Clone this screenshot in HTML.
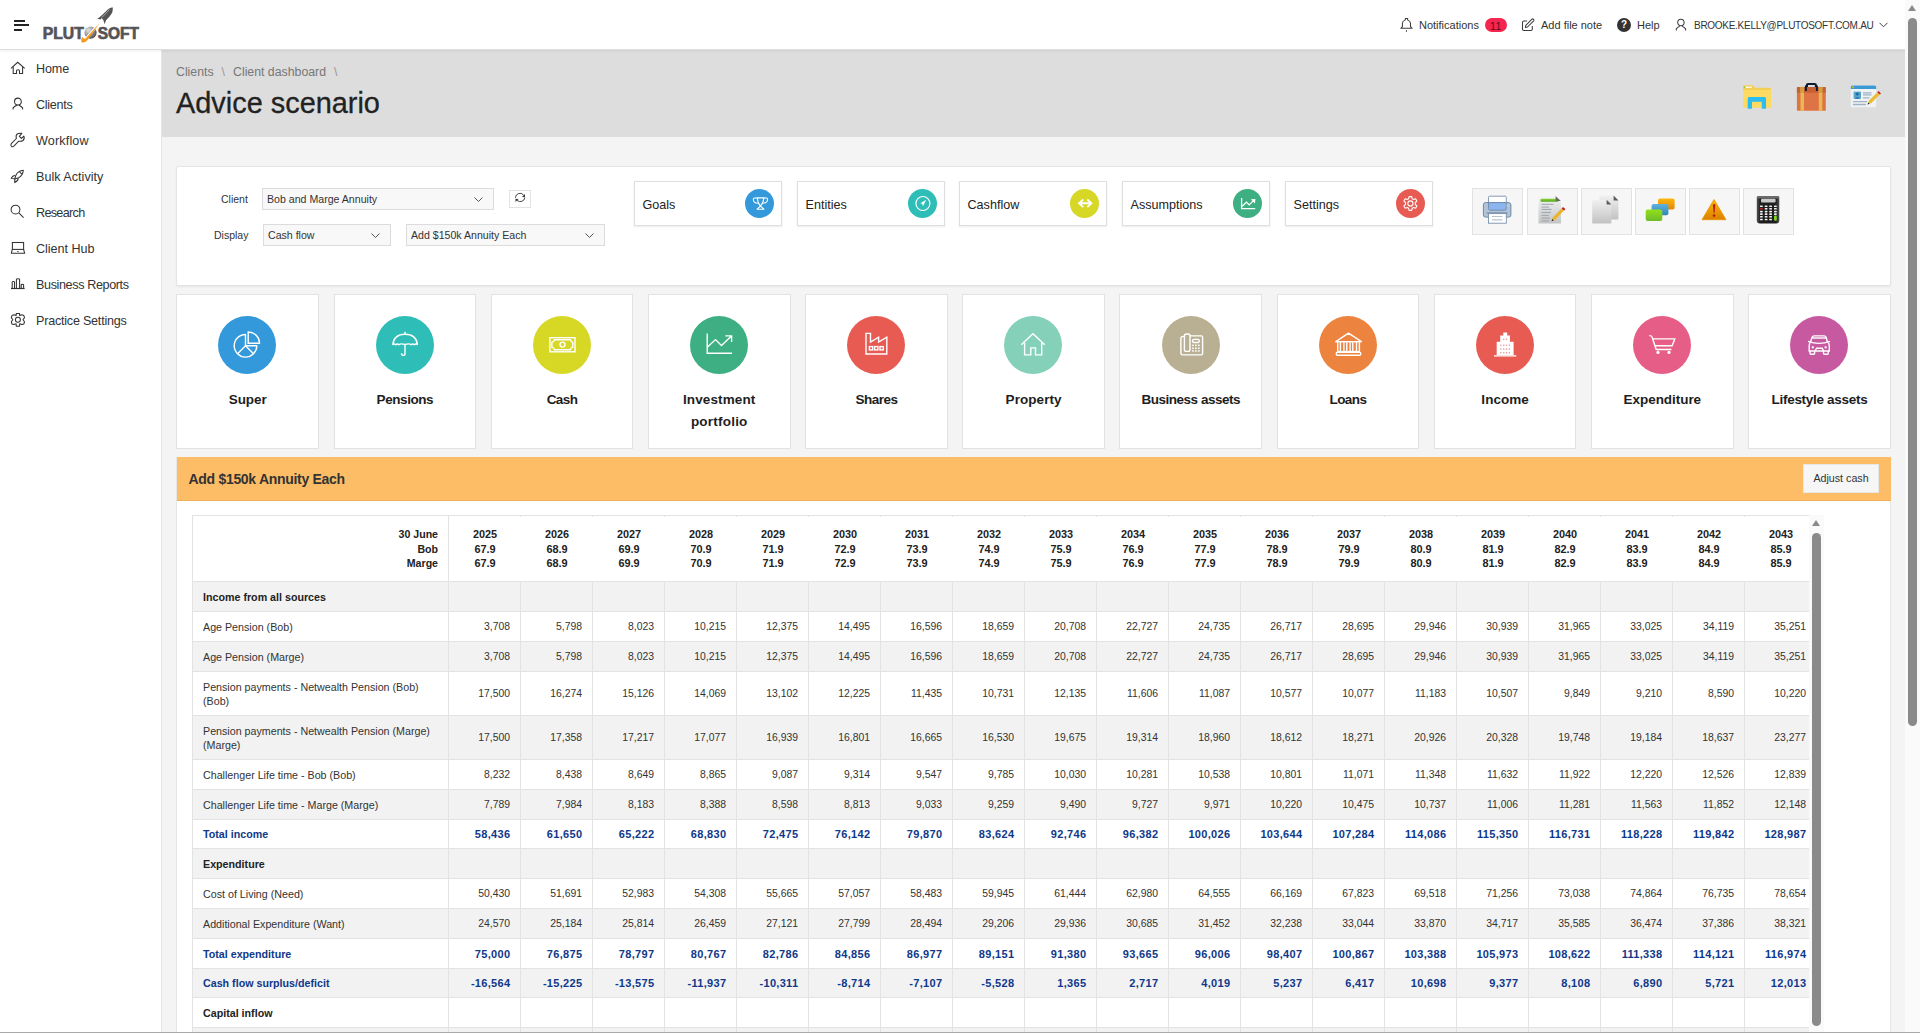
<!DOCTYPE html>
<html><head><meta charset="utf-8"><title>Advice scenario</title>
<style>
*{box-sizing:border-box}
html,body{margin:0;padding:0;overflow:hidden}
body{width:1920px;height:1033px;overflow:hidden;position:relative;background:#f4f4f4;font-family:"Liberation Sans",sans-serif;color:#333}
.abs{position:absolute}
#hdr{position:absolute;left:0;top:0;width:1905px;height:50px;background:#fff;z-index:5;border-bottom:1px solid #dedede;box-shadow:0 1px 3px rgba(0,0,0,.07)}
#side{position:absolute;left:0;top:49px;width:162px;height:984px;background:#fff;border-right:1px solid #e6e6e6;z-index:4}
.nav{position:absolute;left:0;height:20px;margin-top:0.7px;width:160px;font-size:12.6px;color:#333;line-height:20px}
.nav span{position:absolute;left:36px;top:0}
.nav svg{position:absolute;left:10px;top:3px}
#banner{position:absolute;left:162px;top:49px;width:1743px;height:88px;background:#dddddd}
#bc{position:absolute;left:176px;top:65px;font-size:12.3px;color:#777;white-space:nowrap}
#bc i{font-style:normal;margin:0 8px;color:#999}
#title{position:absolute;left:176px;top:85.5px;font-size:28.9px;color:#222;-webkit-text-stroke:0.3px #222;white-space:nowrap;line-height:34px}
#ctl{position:absolute;left:176px;top:166px;width:1715px;height:120px;background:#fff;border:1px solid #e4e4e4;border-radius:2px;box-shadow:0 1px 2px rgba(0,0,0,.06)}
.lbl{position:absolute;font-size:10.5px;color:#333;text-align:right;white-space:nowrap}
.sel{position:absolute;height:22px;background:#f8f8f8;border:1px solid #dcdcdc;font-size:10.6px;color:#333;line-height:20px;padding-left:4px;white-space:nowrap}
.sel svg{position:absolute;right:10px;top:8px}
.acard{position:absolute;top:181px;width:148px;height:45px;background:#fff;border:1px solid #dedede;box-shadow:0 1px 2px rgba(0,0,0,.08)}
.acl{position:absolute;left:7.5px;top:15.5px;font-size:12.6px;color:#222;white-space:nowrap}
.acirc{position:absolute;left:110px;top:7px;width:29px;height:29px;border-radius:50%}
.acirc svg{position:absolute;left:5.5px;top:5.5px}
.tb{position:absolute;top:188px;width:51px;height:47px;background:#f6f6f6;border:1px solid #e2e2e2}
.tb svg{position:absolute;left:9px;top:6px}
.tile{position:absolute;top:294.4px;width:142.6px;height:154.6px;background:#fff;border:1px solid #e2e2e2}
.circ{position:absolute;left:41.1px;top:20.3px;width:58px;height:58px;border-radius:50%}
.circ svg{position:absolute;left:14px;top:14px}
.tl{position:absolute;left:0;top:94px;width:140.6px;text-align:center;font-size:13.5px;font-weight:bold;color:#1e1e1e;line-height:22px;white-space:nowrap}
#obar{position:absolute;left:177px;top:457px;width:1714px;height:44px;background:#fdbd66;border-bottom:1px solid #efae58}
#obar .t{position:absolute;left:11.5px;top:13.5px;font-size:14px;letter-spacing:-0.3px;font-weight:bold;color:#333;white-space:nowrap}
#adj{position:absolute;left:1626px;top:7px;width:76px;height:29px;background:#f6f6f6;border:1px solid #e8e8e8;font-size:10.7px;color:#333;line-height:27px;text-align:center;white-space:nowrap}
#tcont{position:absolute;left:176px;top:457px;width:1715px;height:576px;background:#fff;border:1px solid #e6e6e6}
#tscroll{position:absolute;left:192px;top:515px;width:1617px;height:518px;overflow:hidden}
#tgrid{position:absolute;left:0;top:0;width:1624px;height:600px;border-left:1px solid #e3e3e3;border-top:1px solid #e3e3e3}
.hrow{position:absolute;left:0;width:1624px;background:#fff;border-bottom:1px solid #e3e3e3}
.hc0{position:absolute;left:0;top:11px;width:245px;text-align:right;font-size:10.6px;font-weight:bold;color:#222;line-height:14.5px}
.hc{position:absolute;top:11px;width:72px;text-align:center;font-size:10.9px;font-weight:bold;color:#222;line-height:14.5px}
.hrow:before{content:"";position:absolute;left:255px;top:0;bottom:0;border-left:1px solid #e3e3e3}
.row{position:absolute;left:0;width:1624px;background:#fff;border-bottom:1px solid #e3e3e3}
.row.g{background:#f2f2f2}
.c0{position:absolute;left:0;top:0;bottom:0;width:256px;border-right:1px solid #e3e3e3;padding-left:10px;font-size:10.7px;color:#333;display:flex;align-items:center;line-height:14px;white-space:nowrap}
.c{position:absolute;top:0;bottom:0;width:72px;border-right:1px solid #e3e3e3;text-align:right;padding-right:10px;font-size:10.4px;color:#333;display:flex;align-items:center;justify-content:flex-end}
.sec .c0{font-weight:bold;color:#222}
.tot .c0,.tot .c{font-weight:bold;color:#10388a}
.tot .c{font-size:11px;letter-spacing:0.3px;padding-right:9.7px}
#tsb{position:absolute;left:1809px;top:515px;width:15px;height:518px;background:#fafafa}
#tsb .th{position:absolute;left:3px;top:18px;width:9px;height:493px;border-radius:5px;background:#8a8a8a}
#psb{position:absolute;left:1905px;top:0;width:15px;height:1033px;background:#fafafa;z-index:6}
#psb .th{position:absolute;left:3px;top:18px;width:9px;height:708px;border-radius:5px;background:#8a8a8a}
.arr{position:absolute;left:3px;top:5px;width:0;height:0;border-left:4.5px solid transparent;border-right:4.5px solid transparent;border-bottom:6px solid #8a8a8a}
#bline{position:absolute;left:0;top:1031.6px;width:1920px;height:1.4px;background:#aaaaaa;z-index:7}
.hicon{position:absolute}
.htxt{position:absolute;top:18px;font-size:11px;color:#333;white-space:nowrap;line-height:14px}
</style></head>
<body>
<div id="hdr">
  <!-- hamburger -->
  <div class="abs" style="left:14px;top:20px;width:11px;height:1.6px;background:#222"></div>
  <div class="abs" style="left:14px;top:24.3px;width:15px;height:1.6px;background:#222"></div>
  <div class="abs" style="left:14px;top:29px;width:8px;height:1.6px;background:#222"></div>
  <!-- logo -->
  <svg class="abs" style="left:0;top:0" width="150" height="49" viewBox="0 0 150 49">
    <defs><radialGradient id="sph" cx="0.32" cy="0.3" r="0.75"><stop offset="0" stop-color="#e4e4e4"/><stop offset="0.55" stop-color="#9a9a9a"/><stop offset="1" stop-color="#4a4a4a"/></radialGradient></defs>
    <text x="42.8" y="38.6" font-family="Liberation Sans" font-weight="bold" font-size="16" fill="#545457" stroke="#545457" stroke-width="0.7" textLength="41" lengthAdjust="spacingAndGlyphs">PLUT</text>
    <text x="97.8" y="38.6" font-family="Liberation Sans" font-weight="bold" font-size="16" fill="#545457" stroke="#545457" stroke-width="0.7" textLength="41.2" lengthAdjust="spacingAndGlyphs">SOFT</text>
    <circle cx="90.5" cy="32.6" r="6.1" fill="url(#sph)"/>
    <path d="M85 39.5 L100 22.5" stroke="#fff" stroke-width="2.2"/>
    <path d="M81.4 42.3 Q80.3 39.5 82.3 36.8 Q83.3 39.3 85.6 38.6 L99.8 22.8 L87.6 40 Q84.8 43.3 81.4 42.3 Z" fill="#f39a1c"/>
    <path d="M112.6 7.2 Q113.8 11.5 109.6 16.4 L104.8 21.4 L100.2 16.8 L105.2 11.9 Q109.4 7.6 112.6 7.2 Z" fill="#545457"/>
    <path d="M102.2 15.6 L97.2 18.8 L101 19.6 Z M106.2 19 L104.8 24.2 L103.4 20.6 Z" fill="#545457"/>
    <path d="M101.8 17.6 L109.5 9.6" stroke="#fff" stroke-width="0.6" opacity="0.8"/>
  </svg>
  <!-- right header items -->
  <svg class="hicon" style="left:1396px;top:14px" width="20" height="20" viewBox="0 0 20 20"><path d="M6.4 12.6 V9.2 Q6.4 7.3 9.3 5.9 V4.4 H11.6 V5.9 Q14.5 7.3 14.5 9.2 V12.6 L16.1 14.3 H4.8 Z" stroke="#3d3d3d" stroke-width="1.05" fill="none" stroke-linejoin="round"/><path d="M10.45 16.3 V17.7" stroke="#3d3d3d" stroke-width="1.1"/></svg>
  <span class="htxt" style="left:1419px">Notifications</span>
  <div class="abs" style="left:1485px;top:18px;width:22px;height:14px;border-radius:7px;background:#f4254f;color:#5e0c1c;font-size:10.5px;line-height:17px;text-align:center;letter-spacing:0.5px">11</div>
  <svg class="hicon" style="left:1518px;top:14px" width="20" height="20" viewBox="0 0 20 20"><path d="M9.1 7 H5.8 Q4.5 7 4.5 8.3 V15.2 Q4.5 16.5 5.8 16.5 H13 Q14.3 16.5 14.3 15.2 V12" stroke="#3d3d3d" stroke-width="1.05" fill="none"/><path d="M7.4 13.4 L7.8 11.3 L14 5.1 Q14.8 4.5 15.6 5.3 Q16.3 6.1 15.7 6.8 L9.5 13 Z" stroke="#3d3d3d" stroke-width="1.05" fill="none" stroke-linejoin="round"/></svg>
  <span class="htxt" style="left:1541px">Add file note</span>
  <div class="abs" style="left:1617px;top:18px;width:14px;height:14px;border-radius:50%;background:#333;color:#fff;font-size:10px;font-weight:bold;line-height:14px;text-align:center">?</div>
  <span class="htxt" style="left:1637px">Help</span>
  <svg class="hicon" style="left:1672px;top:14px" width="20" height="20" viewBox="0 0 20 20"><ellipse cx="8.9" cy="8.5" rx="3.2" ry="3.3" stroke="#3d3d3d" stroke-width="1.05" fill="none"/><path d="M4.3 16.6 V14.9 Q5.5 13.3 7.8 12.1 M13.6 16.6 V14.9 Q12.4 13.3 10 12.1" stroke="#3d3d3d" stroke-width="1.05" fill="none"/></svg>
  <span class="htxt" style="left:1694px;font-size:10px;letter-spacing:-0.28px;top:18.5px">BROOKE.KELLY@PLUTOSOFT.COM.AU</span>
  <svg class="hicon" style="left:1879px;top:22px" width="9" height="6" viewBox="0 0 9 6"><path d="M0.5 0.8 L4.5 4.8 L8.5 0.8" stroke="#444" stroke-width="1" fill="none"/></svg>
</div>

<div id="side">
  <svg class="abs" style="left:6px;top:7px" width="30" height="24" viewBox="0 0 30 24"><path d="M5 12.4 L11.7 6.3 L18.7 12.4" stroke="#333" stroke-width="1.05" fill="none"/><path d="M7.2 10.6 V17.4 H10.5 V14.8 Q10.5 13.7 12 13.7 Q13.5 13.7 13.5 14.8 V17.4 H16.6 V10.6" stroke="#333" stroke-width="1.05" fill="none"/></svg>
  <div class="nav" style="top:9px"><span style="letter-spacing:-0.13px">Home</span></div>
  <svg class="abs" style="left:6px;top:43px" width="30" height="24" viewBox="0 0 30 24"><ellipse cx="11.9" cy="9.6" rx="3.4" ry="3.5" stroke="#333" stroke-width="1.05" fill="none"/><path d="M7.1 17.6 V15.9 Q8.3 14.3 10.8 13.2 M16.6 17.6 V15.9 Q15.4 14.3 13 13.2" stroke="#333" stroke-width="1.05" fill="none"/></svg>
  <div class="nav" style="top:45px"><span style="letter-spacing:-0.29px">Clients</span></div>
  <svg class="abs" style="left:6px;top:79px" width="30" height="24" viewBox="0 0 30 24"><path d="M5.3 15.6 L10.4 10.5 Q9.5 7.3 11.2 6 Q12.6 5 15.8 5.3 L13.3 8.4 L15.4 10.4 L17.8 8.1 Q19 10.6 17 12.5 Q15.3 13.7 12.7 13.2 L7.6 18.3 Q6.3 19.3 5.3 18.3 Q4.5 17.2 5.3 15.6 Z" stroke="#333" stroke-width="1.05" fill="none" stroke-linejoin="round"/></svg>
  <div class="nav" style="top:81px"><span style="letter-spacing:0.15px">Workflow</span></div>
  <svg class="abs" style="left:6px;top:115px" width="30" height="24" viewBox="0 0 30 24"><path d="M17.3 6.3 Q12.3 6.6 10 11 L8.6 15.1 L12.6 13.7 Q17 11.3 17.3 6.3 Z" stroke="#333" stroke-width="1.05" fill="none" stroke-linejoin="round"/><path d="M8.9 11.4 Q6.3 11.5 5.3 14.4 L8.4 14.8 M12.2 14.2 Q12.2 16.9 8.8 18.4 L8.8 15" stroke="#333" stroke-width="1.05" fill="none"/><path d="M13.4 7.7 L15.8 10.1" stroke="#333" stroke-width="1.05" fill="none"/></svg>
  <div class="nav" style="top:117px"><span style="letter-spacing:0.01px">Bulk Activity</span></div>
  <svg class="abs" style="left:6px;top:151px" width="30" height="24" viewBox="0 0 30 24"><circle cx="9.5" cy="9.6" r="4.4" stroke="#333" stroke-width="1.05" fill="none"/><path d="M12.8 12.9 L17.6 17.6" stroke="#333" stroke-width="1.05" fill="none" stroke-width="1.15"/></svg>
  <div class="nav" style="top:153px"><span style="letter-spacing:-0.68px">Research</span></div>
  <svg class="abs" style="left:6px;top:187px" width="30" height="24" viewBox="0 0 30 24"><rect x="6.4" y="6.5" width="11.2" height="6.9" stroke="#333" stroke-width="1.05" fill="none"/><path d="M6.3 13.4 L5.3 17.3 H18.7 L17.6 13.4" stroke="#333" stroke-width="1.05" fill="none" stroke-linejoin="round"/><path d="M11 15.5 H12.8" stroke="#555" stroke-width="0.8"/></svg>
  <div class="nav" style="top:189px"><span style="letter-spacing:-0.04px">Client Hub</span></div>
  <svg class="abs" style="left:6px;top:223px" width="30" height="24" viewBox="0 0 30 24"><path d="M5 16.5 H18.6" stroke="#333" stroke-width="1.2"/><path d="M6.2 16.3 V10 Q6.2 9.4 7.3 9.4 Q8.5 9.4 8.5 10 V16.3 M10.4 16.3 V7.5 Q10.4 6.7 12 6.7 Q13.6 6.7 13.6 7.5 V16.3 M15.2 16.3 V12.8 Q15.2 12.3 16.4 12.3 Q17.6 12.3 17.6 12.8 V16.3" stroke="#333" stroke-width="1.05" fill="none"/></svg>
  <div class="nav" style="top:225px"><span style="letter-spacing:-0.38px">Business Reports</span></div>
  <svg class="abs" style="left:6px;top:259px" width="30" height="24" viewBox="0 0 30 24"><path d="M10.3 5.4 H13.5 L13.7 7.6 L15.9 6.8 L17.8 7.4 L18.5 9.6 L17 11.7 L18.5 13.8 L17.8 16 L15.9 16.6 L13.7 15.8 L13.5 18.3 H10.3 L10.1 15.8 L7.9 16.6 L6 16 L5.3 13.8 L6.8 11.7 L5.3 9.6 L6 7.4 L7.9 6.8 L10.1 7.6 Z" stroke="#333" stroke-width="1.05" fill="none" stroke-linejoin="round"/><circle cx="11.9" cy="11.7" r="2.5" stroke="#333" stroke-width="1.05" fill="none"/></svg>
  <div class="nav" style="top:261px"><span style="letter-spacing:-0.23px">Practice Settings</span></div>
</div>

<div id="banner"></div>
<div id="bc">Clients<i>\</i>Client dashboard<i>\</i></div>
<div id="title">Advice scenario</div>
<!-- banner icons -->
<svg class="abs" style="left:1740px;top:82px" width="34" height="30" viewBox="0 0 34 30">
  <path d="M3 4.2 Q3 3.2 4 3.2 H12.5 Q13.3 3.2 13.8 3.9 L15 5.7 H30 Q30.8 5.7 30.8 6.5 V25 Q30.8 25.6 30 25.6 H3.8 Q3 25.6 3 25 Z" fill="#f4cf55"/>
  <path d="M3 8 H30.8 V25 Q30.8 25.6 30 25.6 H3.8 Q3 25.6 3 25 Z" fill="#fddb62"/>
  <path d="M5.3 5.2 H12" stroke="#fff" stroke-width="1.2"/>
  <rect x="3.8" y="4.6" width="1.4" height="1.2" fill="#7cc040"/>
  <path d="M7.7 16.5 Q7.7 15 9.2 15 H24.5 Q26 15 26 16.5 V26.8 H21.8 V19.8 H12 V26.8 H7.7 Z" fill="#2bbcf0"/>
</svg>
<svg class="abs" style="left:1794px;top:80px" width="34" height="33" viewBox="0 0 34 33">
  <path d="M12.9 11 V5.2 Q12.9 4 14.1 4 H20.7 Q21.9 4 21.9 5.2 V11" stroke="#0e1b2c" stroke-width="2.2" fill="none"/>
  <rect x="2.9" y="6.9" width="28.9" height="23.9" rx="0.8" fill="#de7446"/>
  <rect x="2.9" y="6.9" width="28.9" height="5.9" rx="0.8" fill="#c95f34"/>
  <rect x="6.5" y="6.9" width="3.5" height="23.9" fill="#eab852"/>
  <rect x="24.8" y="6.9" width="3.5" height="23.9" fill="#eab852"/>
  <rect x="6.5" y="6.9" width="3.5" height="5.9" fill="#cfa03e"/>
  <rect x="24.8" y="6.9" width="3.5" height="5.9" fill="#cfa03e"/>
  <path d="M11.9 11 V5.5 M22.9 11 V5.5" stroke="#0e1b2c" stroke-width="2"/>
</svg>
<svg class="abs" style="left:1848px;top:82px" width="34" height="28" viewBox="0 0 34 28">
  <rect x="2.8" y="3.4" width="25.4" height="21.8" rx="1.5" fill="#f0f3f6"/>
  <path d="M2.8 6.9 V4.9 Q2.8 3.4 4.3 3.4 H26.7 Q28.2 3.4 28.2 4.9 V6.9 Z" fill="#3a9ad4"/>
  <circle cx="5" cy="5.2" r="1" fill="#e8b020"/>
  <rect x="5.6" y="9.6" width="7.4" height="7.1" fill="#5aa4cc"/>
  <circle cx="9.3" cy="12" r="1.6" fill="#1d6ea8"/>
  <path d="M6.6 16.7 Q9.3 13.8 12 16.7 Z" fill="#1d6ea8"/>
  <path d="M15 10.8 H23.5 M15 12.8 H23.5 M15 15.8 H21.5 M5 19.6 H19 M5 22.5 H18" stroke="#9fb2c4" stroke-width="1.3"/>
  <path d="M19.6 22.4 L21 18.6 L29.4 10.2 L31.8 12.6 L23.4 21 Z" fill="#ecbc30"/>
  <path d="M29.4 10.2 L30.6 9 L33 11.4 L31.8 12.6 Z" fill="#b82020"/>
  <path d="M19.6 22.4 L20.3 20.4 L21.6 21.7 Z" fill="#222"/>
</svg>

<div id="ctl"></div>
<span class="lbl" style="left:221px;top:193px">Client</span>
<div class="sel" style="left:262px;top:188px;width:232px">Bob and Marge Annuity<svg width="9" height="5" viewBox="0 0 9 5"><path d="M0.5 0.5 L4.5 4.5 L8.5 0.5" stroke="#555" stroke-width="1" fill="none"/></svg></div>
<div class="abs" style="left:509px;top:190px;width:22px;height:18px;border:1px solid #e3e3e3;background:#fff"><svg class="abs" style="left:4px;top:1px" width="13" height="13" viewBox="0 0 13 13"><path d="M1.4 5.8 A4.7 4.7 0 0 1 9.6 2.9" stroke="#3a3a3a" stroke-width="0.95" fill="none"/><path d="M7.9 4.9 L11 2 L11 5.2 Z" fill="#3a3a3a"/><path d="M10.9 5.6 A4.7 4.7 0 0 1 3.1 8.4" stroke="#3a3a3a" stroke-width="0.95" fill="none"/><path d="M4.6 7 L1.5 9.9 V6.7 Z" fill="#3a3a3a"/></svg></div>
<span class="lbl" style="left:214px;top:229px">Display</span>
<div class="sel" style="left:263px;top:224px;width:128px">Cash flow<svg width="9" height="5" viewBox="0 0 9 5"><path d="M0.5 0.5 L4.5 4.5 L8.5 0.5" stroke="#555" stroke-width="1" fill="none"/></svg></div>
<div class="sel" style="left:406px;top:224px;width:199px">Add $150k Annuity Each<svg width="9" height="5" viewBox="0 0 9 5"><path d="M0.5 0.5 L4.5 4.5 L8.5 0.5" stroke="#555" stroke-width="1" fill="none"/></svg></div>

<div class="acard" style="left:634px"><span class="acl">Goals</span><div class="acirc" style="background:#3399db"><svg width="18" height="18" viewBox="0 0 18 18"><path d="M6.3 2.9 H12.9 Q12.6 7.5 9.4 11.2 Q6.4 7.5 6.3 2.9 Z" stroke="#fff" stroke-width="1.1" fill="none"/><path d="M6.3 3 H3.6 Q2.2 3 2.4 5 Q2.8 8 6.8 8.3 M12.9 3 H15.4 Q16.7 3 16.5 5 Q16.1 8 12.1 8.3" stroke="#fff" stroke-width="1.1" fill="none"/><path d="M9.4 11.2 L6.1 14.2 H12.9 Z" stroke="#fff" stroke-width="1.1" fill="none" stroke-linejoin="round"/></svg></div></div>
<div class="acard" style="left:797px"><span class="acl">Entities</span><div class="acirc" style="background:#2ebdb7"><svg width="18" height="18" viewBox="0 0 18 18"><circle cx="8.9" cy="8.5" r="7" stroke="#fff" stroke-width="1.2" fill="none"/><path d="M12.3 4.7 L6.3 8.2 L8.3 8.8 L8.9 11.3 Z" fill="#fff"/></svg></div></div>
<div class="acard" style="left:959px"><span class="acl">Cashflow</span><div class="acirc" style="background:#d7d725"><svg width="18" height="18" viewBox="0 0 18 18"><path d="M4.2 8.3 H14.3 M7.2 4.5 L3.1 8.3 L7.2 12.1 M11.3 4.5 L15.4 8.3 L11.3 12.1" stroke="#fff" stroke-width="1.9" fill="none"/></svg></div></div>
<div class="acard" style="left:1122px"><span class="acl">Assumptions</span><div class="acirc" style="background:#3daf82"><svg width="18" height="18" viewBox="0 0 18 18"><path d="M2.6 2.9 V13.6 H16.2" stroke="#fff" stroke-width="1.3" fill="none"/><path d="M3.3 11.2 L7.4 7.1 L10.2 9.9 L14.2 5.9" stroke="#fff" stroke-width="1.3" fill="none"/><path d="M11.8 4.3 L16.4 3.9 L16 8.5 Z" fill="#fff"/></svg></div></div>
<div class="acard" style="left:1285px"><span class="acl">Settings</span><div class="acirc" style="background:#e85b53"><svg width="18" height="18" viewBox="0 0 18 18"><path d="M7.1 1.6 H9.7 L10.2 3.7 L11.6 4.5 L13.6 3.8 L14.9 6.1 L13.3 7.5 V9.5 L14.9 10.9 L13.6 13.2 L11.6 12.5 L10.2 13.3 L9.7 15.4 H7.1 L6.6 13.3 L5.2 12.5 L3.2 13.2 L1.9 10.9 L3.5 9.5 V7.5 L1.9 6.1 L3.2 3.8 L5.2 4.5 L6.6 3.7 Z" stroke="#fff" stroke-width="1.1" fill="none" stroke-linejoin="round"/><circle cx="8.4" cy="8.5" r="2.6" stroke="#fff" stroke-width="1.1" fill="none"/></svg></div></div>

<!-- toolbar -->
<div class="tb" style="left:1472px"><svg width="32" height="32" viewBox="0 0 32 32">
  <rect x="6.5" y="1.2" width="17.8" height="14" rx="1" fill="#fff" stroke="#7890ac" stroke-width="0.9"/>
  <rect x="1.4" y="7.6" width="27.5" height="14.5" rx="2.2" fill="#b3c3d7" stroke="#6f8aab" stroke-width="1"/>
  <path d="M6.5 7.6 H24.3 V13.5 Q24.3 15.2 22.6 15.2 H8.2 Q6.5 15.2 6.5 13.5 Z" fill="#8cb6ef" stroke="#6f8aab" stroke-width="0.9"/>
  <rect x="4.8" y="17.2" width="20.5" height="1.6" fill="#8096b2"/>
  <rect x="6.5" y="18.6" width="17.8" height="9.6" fill="#fff" stroke="#7890ac" stroke-width="0.9"/>
  <path d="M10 21.5 H20.5 M10 24.8 H20.5" stroke="#b8c4d0" stroke-width="1.2"/>
  <circle cx="25.3" cy="10.8" r="0.8" fill="#f0e080"/>
</svg></div>
<div class="tb" style="left:1527px"><svg width="32" height="32" viewBox="0 0 32 32">
  <defs><linearGradient id="dg" x1="0" y1="0" x2="0" y2="1"><stop offset="0" stop-color="#f4f4f4"/><stop offset="1" stop-color="#c4c4c4"/></linearGradient>
  <linearGradient id="gg" x1="0" y1="0" x2="0" y2="1"><stop offset="0" stop-color="#8fd438"/><stop offset="1" stop-color="#4fa818"/></linearGradient></defs>
  <path d="M1.5 1.5 H19 L24 6.5 V28.4 H1.5 Z" fill="url(#dg)"/>
  <rect x="3.5" y="3.7" width="18" height="3.1" rx="1" fill="url(#gg)"/>
  <path d="M18.6 1 L23.8 6 H18.6 Z" fill="#6a6a6a"/>
  <path d="M4.5 9.3 H16.5 M4.5 12.1 H12 M4.5 14.4 H14.5 M4.5 17.4 H14 M4.5 20.3 H12 M4.5 23.1 H13 M4.5 25.9 H12" stroke="#9aa4ae" stroke-width="1"/>
  <path d="M14.6 26.2 L15.8 22.6 L24.6 13.4 L27 15.6 L18.2 24.8 Z" fill="#eab42a"/>
  <path d="M24.6 13.4 L26 11.9 L28.5 14.2 L27 15.6 Z" fill="#c41e1e"/>
  <path d="M14.6 26.2 L15.3 24.1 L16.7 25.4 Z" fill="#222"/>
</svg></div>
<div class="tb" style="left:1581px"><svg width="32" height="32" viewBox="0 0 32 32">
  <defs><linearGradient id="pg" x1="0" y1="0" x2="0" y2="1"><stop offset="0" stop-color="#f0f0f0"/><stop offset="1" stop-color="#c2c2c2"/></linearGradient></defs>
  <path d="M8.5 0.6 H23.3 L27.4 4.9 V24.5 H8.5 Z" fill="url(#pg)"/>
  <path d="M22.6 0.6 L27.4 5.5 H22.6 Z" fill="#5c5c5c"/>
  <path d="M1.2 4.8 H15.9 L20.3 9.4 V28.4 H1.2 Z" fill="url(#pg)"/>
  <path d="M15.6 4.8 L20.3 9.6 H15.6 Z" fill="#5c5c5c"/>
</svg></div>
<div class="tb" style="left:1635px"><svg width="32" height="32" viewBox="0 0 32 32">
  <defs><linearGradient id="og" x1="0" y1="0" x2="0" y2="1"><stop offset="0" stop-color="#fcb80c"/><stop offset="1" stop-color="#e3860a"/></linearGradient>
  <linearGradient id="bg2" x1="0" y1="0" x2="0" y2="1"><stop offset="0" stop-color="#5fb2e0"/><stop offset="1" stop-color="#2f86b4"/></linearGradient>
  <linearGradient id="gr" x1="0" y1="0" x2="0" y2="1"><stop offset="0" stop-color="#94e018"/><stop offset="1" stop-color="#6cbc2c"/></linearGradient></defs>
  <rect x="13" y="3.4" width="16.6" height="11.2" rx="2" fill="url(#og)"/>
  <rect x="6.6" y="9" width="16.8" height="11.3" rx="2" fill="url(#bg2)"/>
  <rect x="0.7" y="14.6" width="16.6" height="11.3" rx="2" fill="url(#gr)"/>
</svg></div>
<div class="tb" style="left:1689px"><svg width="32" height="32" viewBox="0 0 32 32">
  <defs><linearGradient id="wg" x1="0" y1="0" x2="0" y2="1"><stop offset="0" stop-color="#f9bb00"/><stop offset="1" stop-color="#de7f00"/></linearGradient></defs>
  <path d="M15 4.5 L27 24.7 H3 Z" fill="url(#wg)" stroke="#e89400" stroke-width="0.8" stroke-linejoin="round"/>
  <path d="M13.9 9.5 Q15.1 8.6 16.4 9.5 L15.6 17.8 H14.6 Z" fill="#b81c1c"/>
  <circle cx="15.1" cy="20.6" r="1.3" fill="#b81c1c"/>
</svg></div>
<div class="tb" style="left:1743px"><svg width="32" height="32" viewBox="0 0 32 32">
  <defs><linearGradient id="cg" x1="0" y1="0" x2="1" y2="0"><stop offset="0" stop-color="#555"/><stop offset="0.15" stop-color="#1e1e1e"/><stop offset="0.85" stop-color="#1e1e1e"/><stop offset="1" stop-color="#555"/></linearGradient></defs>
  <rect x="3.8" y="0.9" width="22.5" height="27.5" rx="3" fill="url(#cg)"/>
  <rect x="3.8" y="0.9" width="22.5" height="2.5" rx="1.5" fill="#6a6a6a"/>
  <rect x="8" y="3.7" width="14.6" height="3.9" rx="1" fill="#c8c8c8"/>
  <g fill="#f2f2f2">
   <rect x="7" y="10.5" width="2.8" height="1.6" rx="0.6"/><rect x="11.7" y="10.5" width="2.8" height="1.6" rx="0.6"/><rect x="16.2" y="10.5" width="2.8" height="1.6" rx="0.6"/><rect x="21" y="10.5" width="2.8" height="1.6" rx="0.6"/>
   <rect x="11.7" y="13" width="2.8" height="1.6" rx="0.6"/><rect x="16.2" y="13" width="2.8" height="1.6" rx="0.6"/><rect x="21" y="13" width="2.8" height="1.6" rx="0.6"/>
   <rect x="7" y="15.8" width="2.8" height="1.6" rx="0.6"/><rect x="11.7" y="15.8" width="2.8" height="1.6" rx="0.6"/><rect x="16.2" y="15.8" width="2.8" height="1.6" rx="0.6"/><rect x="21" y="15.8" width="2.8" height="1.6" rx="0.6"/>
   <rect x="7" y="18.3" width="2.8" height="1.6" rx="0.6"/><rect x="11.7" y="18.3" width="2.8" height="1.6" rx="0.6"/><rect x="16.2" y="18.3" width="2.8" height="1.6" rx="0.6"/><rect x="21" y="18.3" width="2.8" height="1.6" rx="0.6"/>
   <rect x="7" y="20.9" width="2.8" height="1.6" rx="0.6"/><rect x="11.7" y="20.9" width="2.8" height="1.6" rx="0.6"/><rect x="16.2" y="20.9" width="2.8" height="1.6" rx="0.6"/>
   <rect x="7" y="23.7" width="2.8" height="1.6" rx="0.6"/><rect x="11.7" y="23.7" width="2.8" height="1.6" rx="0.6"/><rect x="16.2" y="23.7" width="2.8" height="1.6" rx="0.6"/>
  </g>
  <rect x="7" y="13" width="2.8" height="1.6" rx="0.6" fill="#d02020"/>
  <rect x="21" y="20.5" width="2.8" height="5.2" rx="1.3" fill="#7ad820"/>
</svg></div>

<div class="tile" style="left:176.40px"><div class="circ" style="background:#3399db"><svg width="30" height="30" viewBox="0 0 30 30"><path d="M13.5 4.5 A11.3 11.3 0 1 0 24.8 15.8 H13.5 Z" stroke="#fff" fill="none" stroke-width="1.4" stroke-linejoin="round"/><path d="M13.5 15.8 L5.5 23.8 M13.5 15.8 L21.5 23.8" stroke="#fff" fill="none" stroke-width="1.4"/><path d="M16.2 13.3 V2 A11.3 11.3 0 0 1 27.5 13.3 Z" stroke="#fff" fill="none" stroke-width="1.4"/></svg></div><div class="tl"><span style="letter-spacing:-0.09px">Super</span></div></div>
<div class="tile" style="left:333.58px"><div class="circ" style="background:#2ebdb7"><svg width="30" height="30" viewBox="0 0 30 30"><path d="M2.8 14.5 Q4 4.3 15 4.3 Q26.2 4.3 27.4 14.5 Q25.8 13.2 24.3 14.7 Q22.7 13.2 21.1 14.7 Q19.4 13.2 15 14.5 Q10.6 13.2 8.9 14.7 Q7.3 13.2 5.8 14.7 Q4.3 13.2 2.8 14.5 Z" stroke="#fff" fill="none" stroke-width="1.4" stroke-linejoin="round"/><path d="M15 1.8 V4.3 M15 14.5 V23.5 Q15 25.4 13.2 25.4 Q11.5 25.4 11.5 23.3" stroke="#fff" fill="none" stroke-width="1.4"/></svg></div><div class="tl"><span style="letter-spacing:-0.43px">Pensions</span></div></div>
<div class="tile" style="left:490.76px"><div class="circ" style="background:#d7d725"><svg width="30" height="30" viewBox="0 0 30 30"><rect x="2.9" y="7.7" width="25.1" height="14.1" stroke="#fff" fill="none" stroke-width="1.4"/><path d="M7.5 9.8 H23.3 Q23.8 11.6 25.7 12.3 V17.2 Q23.8 17.9 23.3 19.7 H7.5 Q7 17.9 4.9 17.2 V12.3 Q7 11.6 7.5 9.8 Z" stroke="#fff" fill="none" stroke-width="1.4"/><circle cx="15.5" cy="14.6" r="2.5" stroke="#fff" fill="none" stroke-width="1.4"/></svg></div><div class="tl"><span style="letter-spacing:-0.57px">Cash</span></div></div>
<div class="tile" style="left:647.94px"><div class="circ" style="background:#3daf82"><svg width="30" height="30" viewBox="0 0 30 30"><path d="M3.2 3.6 V23.2 H28" stroke="#fff" fill="none" stroke-width="1.4" stroke-width="1.5"/><path d="M3.3 17.2 L11.5 9.6 L17.5 15.6 L27.4 5.9 M21.3 5.9 H27.6 V12" stroke="#fff" fill="none" stroke-width="1.4" stroke-width="1.5"/></svg></div><div class="tl"><span style="letter-spacing:0.12px">Investment</span><br><span style="letter-spacing:0.22px">portfolio</span></div></div>
<div class="tile" style="left:805.12px"><div class="circ" style="background:#e85b53"><svg width="30" height="30" viewBox="0 0 30 30"><path d="M5 24 V3.4 H9.5 V12.1 L17.6 7.2 V12.1 L25.8 7.2 V24 Z" stroke="#fff" fill="none" stroke-width="1.4" stroke-width="1.5" stroke-linejoin="miter"/><rect x="8.4" y="16.6" width="3.3" height="3.3" stroke="#fff" fill="none" stroke-width="1.4" stroke-width="1.2"/><rect x="13.6" y="16.6" width="3.3" height="3.3" stroke="#fff" fill="none" stroke-width="1.4" stroke-width="1.2"/><rect x="19" y="16.6" width="3.3" height="3.3" stroke="#fff" fill="none" stroke-width="1.4" stroke-width="1.2"/></svg></div><div class="tl"><span style="letter-spacing:-0.50px">Shares</span></div></div>
<div class="tile" style="left:962.30px"><div class="circ" style="background:#84d0b8"><svg width="30" height="30" viewBox="0 0 30 30"><path d="M3.3 14.8 L14.95 3.8 L26.8 14.8" stroke="#fff" fill="none" stroke-width="1.4" stroke-width="1.5"/><path d="M6.6 13 V24.9 H12.8 V17.9 H17.5 V24.9 H23.7 V13" stroke="#fff" fill="none" stroke-width="1.4" stroke-width="1.5"/></svg></div><div class="tl"><span style="letter-spacing:0.06px">Property</span></div></div>
<div class="tile" style="left:1119.48px"><div class="circ" style="background:#b9b093"><svg width="30" height="30" viewBox="0 0 30 30"><path d="M8.4 6.4 Q6.6 6.2 5.5 6.9 Q4.9 7.4 4.9 8.5 V23.5 Q4.9 24.9 6.3 24.9 H25.3 Q26.6 24.9 26.6 23.5 V7.3 Q26.6 5.9 25.3 5.9 H14" stroke="#fff" fill="none" stroke-width="1.4"/><rect x="8.4" y="4" width="5.6" height="17.4" rx="2" stroke="#fff" fill="none" stroke-width="1.4"/><rect x="16.5" y="9.4" width="6.8" height="3.1" rx="1.5" stroke="#fff" fill="none" stroke-width="1.4"/><g fill="#fff"><rect x="16.1" y="14.6" width="1.7" height="1.5"/><rect x="19" y="14.6" width="1.7" height="1.5"/><rect x="21.9" y="14.6" width="1.7" height="1.5"/><rect x="16.1" y="17.5" width="1.7" height="1.5"/><rect x="19" y="17.5" width="1.7" height="1.5"/><rect x="21.9" y="17.5" width="1.7" height="1.5"/><rect x="16.1" y="20.2" width="1.7" height="1.5"/><rect x="19" y="20.2" width="1.7" height="1.5"/><rect x="21.9" y="20.2" width="1.7" height="1.5"/></g></svg></div><div class="tl"><span style="letter-spacing:-0.47px">Business assets</span></div></div>
<div class="tile" style="left:1276.66px"><div class="circ" style="background:#ec833f"><svg width="30" height="30" viewBox="0 0 30 30"><path d="M2.8 11.7 L15.5 3.2 L28.4 11.7 Z" stroke="#fff" fill="none" stroke-width="1.4" stroke-linejoin="round"/><path d="M4.7 12.3 V21.6 M7.4 12.3 V21.6 M10.9 12.3 V21.6 M13.8 12.3 V21.6 M17.1 12.3 V21.6 M19.8 12.3 V21.6 M23.5 12.3 V21.6 M26.4 12.3 V21.6" stroke="#fff" fill="none" stroke-width="1.4" stroke-width="1.1"/><path d="M4 21.6 H27" stroke="#fff" fill="none" stroke-width="1.4"/><rect x="3.3" y="22.2" width="24.4" height="3.1" rx="1" stroke="#fff" fill="none" stroke-width="1.4"/></svg></div><div class="tl"><span style="letter-spacing:-0.55px">Loans</span></div></div>
<div class="tile" style="left:1433.84px"><div class="circ" style="background:#e85b53"><svg width="30" height="30" viewBox="0 0 30 30"><path fill="#fff" d="M13.3 2.4 H17.2 V5.5 H19.9 V11.7 H23.6 V25.3 H6.7 V11.7 H10.2 V5.5 H13.3 Z"/><path d="M4 25.9 H26.3" stroke="#fff" stroke-width="1.3"/><g fill="#e8a19d"><rect x="13.1" y="8.5" width="1.3" height="1.5"/><rect x="15.8" y="8.5" width="1.3" height="1.5"/><rect x="10.2" y="14.6" width="1.3" height="1.5"/><rect x="13.1" y="14.6" width="1.3" height="1.5"/><rect x="15.8" y="14.6" width="1.3" height="1.5"/><rect x="18.7" y="14.6" width="1.3" height="1.5"/><rect x="10.2" y="18.3" width="1.3" height="1.5"/><rect x="13.1" y="18.3" width="1.3" height="1.5"/><rect x="15.8" y="18.3" width="1.3" height="1.5"/><rect x="18.7" y="18.3" width="1.3" height="1.5"/><rect x="10.2" y="22" width="1.3" height="1.5"/><rect x="13.1" y="22" width="1.3" height="1.5"/><rect x="15.8" y="22" width="1.3" height="1.5"/><rect x="18.7" y="22" width="1.3" height="1.5"/></g></svg></div><div class="tl"><span style="letter-spacing:0.04px">Income</span></div></div>
<div class="tile" style="left:1591.02px"><div class="circ" style="background:#e65d88"><svg width="30" height="30" viewBox="0 0 30 30"><path d="M2.3 5.6 Q4.6 5.4 5 6.9 L9.2 19.5 H24.4" stroke="#fff" fill="none" stroke-width="1.4"/><path d="M5.8 8.9 H27.8 L25.1 15.8 H8" stroke="#fff" fill="none" stroke-width="1.4"/><circle cx="11" cy="22.4" r="1.6" fill="#fff"/><circle cx="22" cy="22.4" r="1.6" fill="#fff"/></svg></div><div class="tl"><span style="letter-spacing:-0.05px">Expenditure</span></div></div>
<div class="tile" style="left:1748.20px"><div class="circ" style="background:#c759a1"><svg width="30" height="30" viewBox="0 0 30 30"><path d="M6.3 12.7 L8 7.5 Q8.6 5.9 10.3 5.9 H20 Q21.7 5.9 22.2 7.5 L23.6 12.7" stroke="#fff" fill="none" stroke-width="1.4"/><path d="M8.3 8 H22" stroke="#fff" fill="none" stroke-width="1.4" stroke-width="1.1"/><path d="M4 11.3 Q15 15.5 26.1 11.3" stroke="#fff" fill="none" stroke-width="1.4"/><path d="M6 12.8 Q5.2 14 5.2 16 V21 H25.3 V16 Q25.3 14 24.5 12.8" stroke="#fff" fill="none" stroke-width="1.4"/><path d="M6 21 V23.2 Q6 24.2 7 24.2 H9.7 Q10.6 24.2 10.6 23.2 V21 M19.5 21 V23.2 Q19.5 24.2 20.5 24.2 H23.3 Q24.3 24.2 24.3 23.2 V21" stroke="#fff" fill="none" stroke-width="1.4"/><path d="M11 20.8 L12.6 18.2 H18.2 L19.6 20.8" stroke="#fff" fill="none" stroke-width="1.4"/><rect x="7.8" y="16.3" width="2" height="2" fill="#fff"/><rect x="20.6" y="16.3" width="2" height="2" fill="#fff"/></svg></div><div class="tl"><span style="letter-spacing:-0.30px">Lifestyle assets</span></div></div>

<div id="tcont"></div>
<div id="obar"><span class="t">Add $150k Annuity Each</span><div id="adj">Adjust cash</div></div>
<div id="tscroll"><div id="tgrid">
<div class="hrow" style="top:0;height:66px"><div class="hc0">30 June<br>Bob<br>Marge</div><div class="hc" style="left:256px">2025<br>67.9<br>67.9</div><div class="hc" style="left:328px">2026<br>68.9<br>68.9</div><div class="hc" style="left:400px">2027<br>69.9<br>69.9</div><div class="hc" style="left:472px">2028<br>70.9<br>70.9</div><div class="hc" style="left:544px">2029<br>71.9<br>71.9</div><div class="hc" style="left:616px">2030<br>72.9<br>72.9</div><div class="hc" style="left:688px">2031<br>73.9<br>73.9</div><div class="hc" style="left:760px">2032<br>74.9<br>74.9</div><div class="hc" style="left:832px">2033<br>75.9<br>75.9</div><div class="hc" style="left:904px">2034<br>76.9<br>76.9</div><div class="hc" style="left:976px">2035<br>77.9<br>77.9</div><div class="hc" style="left:1048px">2036<br>78.9<br>78.9</div><div class="hc" style="left:1120px">2037<br>79.9<br>79.9</div><div class="hc" style="left:1192px">2038<br>80.9<br>80.9</div><div class="hc" style="left:1264px">2039<br>81.9<br>81.9</div><div class="hc" style="left:1336px">2040<br>82.9<br>82.9</div><div class="hc" style="left:1408px">2041<br>83.9<br>83.9</div><div class="hc" style="left:1480px">2042<br>84.9<br>84.9</div><div class="hc" style="left:1552px">2043<br>85.9<br>85.9</div><div style="position:absolute;left:327px;top:0;width:1px;height:1px;background:#e3e3e3"></div><div style="position:absolute;left:399px;top:0;width:1px;height:1px;background:#e3e3e3"></div><div style="position:absolute;left:471px;top:0;width:1px;height:1px;background:#e3e3e3"></div><div style="position:absolute;left:543px;top:0;width:1px;height:1px;background:#e3e3e3"></div><div style="position:absolute;left:615px;top:0;width:1px;height:1px;background:#e3e3e3"></div><div style="position:absolute;left:687px;top:0;width:1px;height:1px;background:#e3e3e3"></div><div style="position:absolute;left:759px;top:0;width:1px;height:1px;background:#e3e3e3"></div><div style="position:absolute;left:831px;top:0;width:1px;height:1px;background:#e3e3e3"></div><div style="position:absolute;left:903px;top:0;width:1px;height:1px;background:#e3e3e3"></div><div style="position:absolute;left:975px;top:0;width:1px;height:1px;background:#e3e3e3"></div><div style="position:absolute;left:1047px;top:0;width:1px;height:1px;background:#e3e3e3"></div><div style="position:absolute;left:1119px;top:0;width:1px;height:1px;background:#e3e3e3"></div><div style="position:absolute;left:1191px;top:0;width:1px;height:1px;background:#e3e3e3"></div><div style="position:absolute;left:1263px;top:0;width:1px;height:1px;background:#e3e3e3"></div><div style="position:absolute;left:1335px;top:0;width:1px;height:1px;background:#e3e3e3"></div><div style="position:absolute;left:1407px;top:0;width:1px;height:1px;background:#e3e3e3"></div><div style="position:absolute;left:1479px;top:0;width:1px;height:1px;background:#e3e3e3"></div><div style="position:absolute;left:1551px;top:0;width:1px;height:1px;background:#e3e3e3"></div><div style="position:absolute;left:1623px;top:0;width:1px;height:1px;background:#e3e3e3"></div></div>
<div class="row g sec" style="top:66.0px;height:30.0px"><div class="c0">Income from all sources</div><div class="c" style="left:256px"></div><div class="c" style="left:328px"></div><div class="c" style="left:400px"></div><div class="c" style="left:472px"></div><div class="c" style="left:544px"></div><div class="c" style="left:616px"></div><div class="c" style="left:688px"></div><div class="c" style="left:760px"></div><div class="c" style="left:832px"></div><div class="c" style="left:904px"></div><div class="c" style="left:976px"></div><div class="c" style="left:1048px"></div><div class="c" style="left:1120px"></div><div class="c" style="left:1192px"></div><div class="c" style="left:1264px"></div><div class="c" style="left:1336px"></div><div class="c" style="left:1408px"></div><div class="c" style="left:1480px"></div><div class="c" style="left:1552px"></div></div>
<div class="row" style="top:96.0px;height:30.0px"><div class="c0">Age Pension (Bob)</div><div class="c" style="left:256px">3,708</div><div class="c" style="left:328px">5,798</div><div class="c" style="left:400px">8,023</div><div class="c" style="left:472px">10,215</div><div class="c" style="left:544px">12,375</div><div class="c" style="left:616px">14,495</div><div class="c" style="left:688px">16,596</div><div class="c" style="left:760px">18,659</div><div class="c" style="left:832px">20,708</div><div class="c" style="left:904px">22,727</div><div class="c" style="left:976px">24,735</div><div class="c" style="left:1048px">26,717</div><div class="c" style="left:1120px">28,695</div><div class="c" style="left:1192px">29,946</div><div class="c" style="left:1264px">30,939</div><div class="c" style="left:1336px">31,965</div><div class="c" style="left:1408px">33,025</div><div class="c" style="left:1480px">34,119</div><div class="c" style="left:1552px">35,251</div></div>
<div class="row g" style="top:126.0px;height:30.0px"><div class="c0">Age Pension (Marge)</div><div class="c" style="left:256px">3,708</div><div class="c" style="left:328px">5,798</div><div class="c" style="left:400px">8,023</div><div class="c" style="left:472px">10,215</div><div class="c" style="left:544px">12,375</div><div class="c" style="left:616px">14,495</div><div class="c" style="left:688px">16,596</div><div class="c" style="left:760px">18,659</div><div class="c" style="left:832px">20,708</div><div class="c" style="left:904px">22,727</div><div class="c" style="left:976px">24,735</div><div class="c" style="left:1048px">26,717</div><div class="c" style="left:1120px">28,695</div><div class="c" style="left:1192px">29,946</div><div class="c" style="left:1264px">30,939</div><div class="c" style="left:1336px">31,965</div><div class="c" style="left:1408px">33,025</div><div class="c" style="left:1480px">34,119</div><div class="c" style="left:1552px">35,251</div></div>
<div class="row" style="top:156.0px;height:44.0px"><div class="c0 two">Pension payments - Netwealth Pension (Bob)<br>(Bob)</div><div class="c" style="left:256px">17,500</div><div class="c" style="left:328px">16,274</div><div class="c" style="left:400px">15,126</div><div class="c" style="left:472px">14,069</div><div class="c" style="left:544px">13,102</div><div class="c" style="left:616px">12,225</div><div class="c" style="left:688px">11,435</div><div class="c" style="left:760px">10,731</div><div class="c" style="left:832px">12,135</div><div class="c" style="left:904px">11,606</div><div class="c" style="left:976px">11,087</div><div class="c" style="left:1048px">10,577</div><div class="c" style="left:1120px">10,077</div><div class="c" style="left:1192px">11,183</div><div class="c" style="left:1264px">10,507</div><div class="c" style="left:1336px">9,849</div><div class="c" style="left:1408px">9,210</div><div class="c" style="left:1480px">8,590</div><div class="c" style="left:1552px">10,220</div></div>
<div class="row g" style="top:200.0px;height:44.0px"><div class="c0 two">Pension payments - Netwealth Pension (Marge)<br>(Marge)</div><div class="c" style="left:256px">17,500</div><div class="c" style="left:328px">17,358</div><div class="c" style="left:400px">17,217</div><div class="c" style="left:472px">17,077</div><div class="c" style="left:544px">16,939</div><div class="c" style="left:616px">16,801</div><div class="c" style="left:688px">16,665</div><div class="c" style="left:760px">16,530</div><div class="c" style="left:832px">19,675</div><div class="c" style="left:904px">19,314</div><div class="c" style="left:976px">18,960</div><div class="c" style="left:1048px">18,612</div><div class="c" style="left:1120px">18,271</div><div class="c" style="left:1192px">20,926</div><div class="c" style="left:1264px">20,328</div><div class="c" style="left:1336px">19,748</div><div class="c" style="left:1408px">19,184</div><div class="c" style="left:1480px">18,637</div><div class="c" style="left:1552px">23,277</div></div>
<div class="row" style="top:244.0px;height:30.0px"><div class="c0">Challenger Life time - Bob (Bob)</div><div class="c" style="left:256px">8,232</div><div class="c" style="left:328px">8,438</div><div class="c" style="left:400px">8,649</div><div class="c" style="left:472px">8,865</div><div class="c" style="left:544px">9,087</div><div class="c" style="left:616px">9,314</div><div class="c" style="left:688px">9,547</div><div class="c" style="left:760px">9,785</div><div class="c" style="left:832px">10,030</div><div class="c" style="left:904px">10,281</div><div class="c" style="left:976px">10,538</div><div class="c" style="left:1048px">10,801</div><div class="c" style="left:1120px">11,071</div><div class="c" style="left:1192px">11,348</div><div class="c" style="left:1264px">11,632</div><div class="c" style="left:1336px">11,922</div><div class="c" style="left:1408px">12,220</div><div class="c" style="left:1480px">12,526</div><div class="c" style="left:1552px">12,839</div></div>
<div class="row g" style="top:274.0px;height:30.0px"><div class="c0">Challenger Life time - Marge (Marge)</div><div class="c" style="left:256px">7,789</div><div class="c" style="left:328px">7,984</div><div class="c" style="left:400px">8,183</div><div class="c" style="left:472px">8,388</div><div class="c" style="left:544px">8,598</div><div class="c" style="left:616px">8,813</div><div class="c" style="left:688px">9,033</div><div class="c" style="left:760px">9,259</div><div class="c" style="left:832px">9,490</div><div class="c" style="left:904px">9,727</div><div class="c" style="left:976px">9,971</div><div class="c" style="left:1048px">10,220</div><div class="c" style="left:1120px">10,475</div><div class="c" style="left:1192px">10,737</div><div class="c" style="left:1264px">11,006</div><div class="c" style="left:1336px">11,281</div><div class="c" style="left:1408px">11,563</div><div class="c" style="left:1480px">11,852</div><div class="c" style="left:1552px">12,148</div></div>
<div class="row tot" style="top:304.0px;height:29.0px"><div class="c0">Total income</div><div class="c" style="left:256px">58,436</div><div class="c" style="left:328px">61,650</div><div class="c" style="left:400px">65,222</div><div class="c" style="left:472px">68,830</div><div class="c" style="left:544px">72,475</div><div class="c" style="left:616px">76,142</div><div class="c" style="left:688px">79,870</div><div class="c" style="left:760px">83,624</div><div class="c" style="left:832px">92,746</div><div class="c" style="left:904px">96,382</div><div class="c" style="left:976px">100,026</div><div class="c" style="left:1048px">103,644</div><div class="c" style="left:1120px">107,284</div><div class="c" style="left:1192px">114,086</div><div class="c" style="left:1264px">115,350</div><div class="c" style="left:1336px">116,731</div><div class="c" style="left:1408px">118,228</div><div class="c" style="left:1480px">119,842</div><div class="c" style="left:1552px">128,987</div></div>
<div class="row g sec" style="top:333.0px;height:30.0px"><div class="c0">Expenditure</div><div class="c" style="left:256px"></div><div class="c" style="left:328px"></div><div class="c" style="left:400px"></div><div class="c" style="left:472px"></div><div class="c" style="left:544px"></div><div class="c" style="left:616px"></div><div class="c" style="left:688px"></div><div class="c" style="left:760px"></div><div class="c" style="left:832px"></div><div class="c" style="left:904px"></div><div class="c" style="left:976px"></div><div class="c" style="left:1048px"></div><div class="c" style="left:1120px"></div><div class="c" style="left:1192px"></div><div class="c" style="left:1264px"></div><div class="c" style="left:1336px"></div><div class="c" style="left:1408px"></div><div class="c" style="left:1480px"></div><div class="c" style="left:1552px"></div></div>
<div class="row" style="top:363.0px;height:30.0px"><div class="c0">Cost of Living (Need)</div><div class="c" style="left:256px">50,430</div><div class="c" style="left:328px">51,691</div><div class="c" style="left:400px">52,983</div><div class="c" style="left:472px">54,308</div><div class="c" style="left:544px">55,665</div><div class="c" style="left:616px">57,057</div><div class="c" style="left:688px">58,483</div><div class="c" style="left:760px">59,945</div><div class="c" style="left:832px">61,444</div><div class="c" style="left:904px">62,980</div><div class="c" style="left:976px">64,555</div><div class="c" style="left:1048px">66,169</div><div class="c" style="left:1120px">67,823</div><div class="c" style="left:1192px">69,518</div><div class="c" style="left:1264px">71,256</div><div class="c" style="left:1336px">73,038</div><div class="c" style="left:1408px">74,864</div><div class="c" style="left:1480px">76,735</div><div class="c" style="left:1552px">78,654</div></div>
<div class="row g" style="top:393.0px;height:30.0px"><div class="c0">Additional Expenditure (Want)</div><div class="c" style="left:256px">24,570</div><div class="c" style="left:328px">25,184</div><div class="c" style="left:400px">25,814</div><div class="c" style="left:472px">26,459</div><div class="c" style="left:544px">27,121</div><div class="c" style="left:616px">27,799</div><div class="c" style="left:688px">28,494</div><div class="c" style="left:760px">29,206</div><div class="c" style="left:832px">29,936</div><div class="c" style="left:904px">30,685</div><div class="c" style="left:976px">31,452</div><div class="c" style="left:1048px">32,238</div><div class="c" style="left:1120px">33,044</div><div class="c" style="left:1192px">33,870</div><div class="c" style="left:1264px">34,717</div><div class="c" style="left:1336px">35,585</div><div class="c" style="left:1408px">36,474</div><div class="c" style="left:1480px">37,386</div><div class="c" style="left:1552px">38,321</div></div>
<div class="row tot" style="top:423.0px;height:30.0px"><div class="c0">Total expenditure</div><div class="c" style="left:256px">75,000</div><div class="c" style="left:328px">76,875</div><div class="c" style="left:400px">78,797</div><div class="c" style="left:472px">80,767</div><div class="c" style="left:544px">82,786</div><div class="c" style="left:616px">84,856</div><div class="c" style="left:688px">86,977</div><div class="c" style="left:760px">89,151</div><div class="c" style="left:832px">91,380</div><div class="c" style="left:904px">93,665</div><div class="c" style="left:976px">96,006</div><div class="c" style="left:1048px">98,407</div><div class="c" style="left:1120px">100,867</div><div class="c" style="left:1192px">103,388</div><div class="c" style="left:1264px">105,973</div><div class="c" style="left:1336px">108,622</div><div class="c" style="left:1408px">111,338</div><div class="c" style="left:1480px">114,121</div><div class="c" style="left:1552px">116,974</div></div>
<div class="row g tot" style="top:453.0px;height:29.0px"><div class="c0">Cash flow surplus/deficit</div><div class="c" style="left:256px">-16,564</div><div class="c" style="left:328px">-15,225</div><div class="c" style="left:400px">-13,575</div><div class="c" style="left:472px">-11,937</div><div class="c" style="left:544px">-10,311</div><div class="c" style="left:616px">-8,714</div><div class="c" style="left:688px">-7,107</div><div class="c" style="left:760px">-5,528</div><div class="c" style="left:832px">1,365</div><div class="c" style="left:904px">2,717</div><div class="c" style="left:976px">4,019</div><div class="c" style="left:1048px">5,237</div><div class="c" style="left:1120px">6,417</div><div class="c" style="left:1192px">10,698</div><div class="c" style="left:1264px">9,377</div><div class="c" style="left:1336px">8,108</div><div class="c" style="left:1408px">6,890</div><div class="c" style="left:1480px">5,721</div><div class="c" style="left:1552px">12,013</div></div>
<div class="row sec" style="top:482.0px;height:30.0px"><div class="c0">Capital inflow</div><div class="c" style="left:256px"></div><div class="c" style="left:328px"></div><div class="c" style="left:400px"></div><div class="c" style="left:472px"></div><div class="c" style="left:544px"></div><div class="c" style="left:616px"></div><div class="c" style="left:688px"></div><div class="c" style="left:760px"></div><div class="c" style="left:832px"></div><div class="c" style="left:904px"></div><div class="c" style="left:976px"></div><div class="c" style="left:1048px"></div><div class="c" style="left:1120px"></div><div class="c" style="left:1192px"></div><div class="c" style="left:1264px"></div><div class="c" style="left:1336px"></div><div class="c" style="left:1408px"></div><div class="c" style="left:1480px"></div><div class="c" style="left:1552px"></div></div>
<div class="row g" style="top:512.0px;height:30.0px"><div class="c0">&nbsp;</div><div class="c" style="left:256px"></div><div class="c" style="left:328px"></div><div class="c" style="left:400px"></div><div class="c" style="left:472px"></div><div class="c" style="left:544px"></div><div class="c" style="left:616px"></div><div class="c" style="left:688px"></div><div class="c" style="left:760px"></div><div class="c" style="left:832px"></div><div class="c" style="left:904px"></div><div class="c" style="left:976px"></div><div class="c" style="left:1048px"></div><div class="c" style="left:1120px"></div><div class="c" style="left:1192px"></div><div class="c" style="left:1264px"></div><div class="c" style="left:1336px"></div><div class="c" style="left:1408px"></div><div class="c" style="left:1480px"></div><div class="c" style="left:1552px"></div></div>
</div></div>
<div id="tsb"><div class="arr"></div><div class="th"></div></div>
<div id="psb"><div class="arr"></div><div class="th"></div></div>
<div id="bline"></div>
</body></html>
